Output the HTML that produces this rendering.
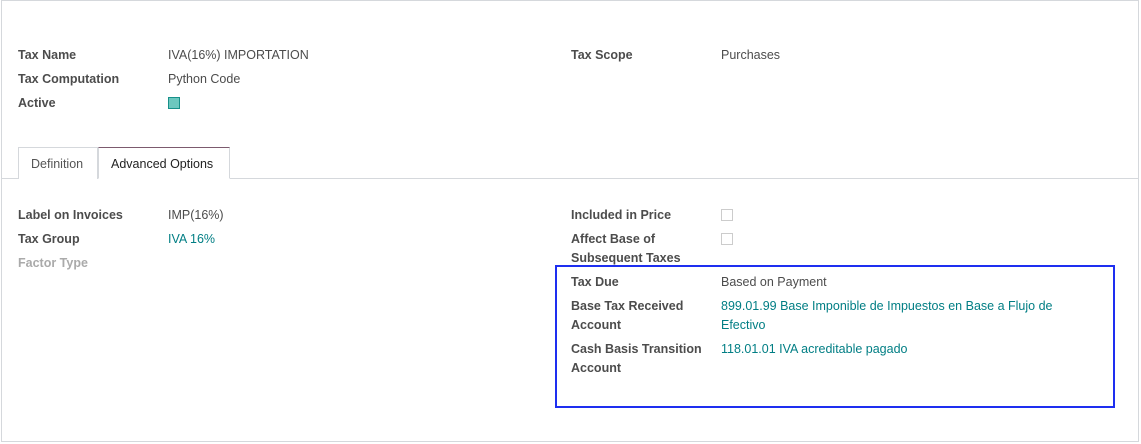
<!DOCTYPE html>
<html><head><style>
body{margin:0;width:1141px;height:444px;background:#fff;font-family:"Liberation Sans",sans-serif;font-size:12.5px;color:#4c4c4c;position:relative;overflow:hidden}
.frame{position:absolute;left:1px;top:0;width:1138px;height:442px;border:1px solid #d5d8dc;box-sizing:border-box}
.t{position:absolute;white-space:nowrap;line-height:19px;margin-top:1px}
.b{font-weight:bold;color:#4c4c4c}
.g{color:#017e84}
.m{color:#aaa;font-weight:bold}
.cb{position:absolute;width:12px;height:12px;border:1px solid #ccc;box-sizing:border-box;background:#fff}
</style></head><body>
<div class="frame"></div>
<div class="t b" style="left:18px;top:45px">Tax Name</div>
<div class="t" style="left:168px;top:45px">IVA(16%) IMPORTATION</div>
<div class="t b" style="left:18px;top:69px">Tax Computation</div>
<div class="t" style="left:168px;top:69px">Python Code</div>
<div class="t b" style="left:18px;top:93px">Active</div>
<div class="cb" style="left:168px;top:97px;background:#6cc8bf;border-color:#17908a"></div>
<div class="t b" style="left:571px;top:45px">Tax Scope</div>
<div class="t" style="left:721px;top:45px">Purchases</div>
<div style="position:absolute;left:1px;top:178px;width:1138px;border-top:1px solid #d5d8dc"></div>
<div style="position:absolute;left:18px;top:147px;width:80px;height:32px;border:1px solid #d5d8dc;border-bottom:none;box-sizing:border-box;background:#fff"></div>
<div class="t" style="left:31px;top:154px;color:#555">Definition</div>
<div style="position:absolute;left:98px;top:147px;width:132px;height:32px;border:1px solid #d5d8dc;border-top-color:#7c5a6e;border-bottom:1px solid #fff;box-sizing:border-box;background:#fff"></div>
<div class="t" style="left:111px;top:154px;color:#222">Advanced Options</div>
<div class="t b" style="left:18px;top:205px">Label on Invoices</div>
<div class="t" style="left:168px;top:205px">IMP(16%)</div>
<div class="t b" style="left:18px;top:229px">Tax Group</div>
<div class="t g" style="left:168px;top:229px">IVA 16%</div>
<div class="t m" style="left:18px;top:253px">Factor Type</div>
<div class="t b" style="left:571px;top:205px">Included in Price</div>
<div class="cb" style="left:721px;top:209px"></div>
<div class="t b" style="left:571px;top:229px">Affect Base of</div>
<div class="cb" style="left:721px;top:233px"></div>
<div class="t b" style="left:571px;top:248px">Subsequent Taxes</div>
<div class="t b" style="left:571px;top:272px">Tax Due</div>
<div class="t" style="left:721px;top:272px">Based on Payment</div>
<div class="t b" style="left:571px;top:296px">Base Tax Received</div>
<div class="t b" style="left:571px;top:315px">Account</div>
<div class="t g" style="left:721px;top:296px">899.01.99 Base Imponible de Impuestos en Base a Flujo de</div>
<div class="t g" style="left:721px;top:315px">Efectivo</div>
<div class="t b" style="left:571px;top:339px">Cash Basis Transition</div>
<div class="t b" style="left:571px;top:358px">Account</div>
<div class="t g" style="left:721px;top:339px">118.01.01 IVA acreditable pagado</div>
<div style="position:absolute;left:555px;top:265px;width:560px;height:143px;border:2px solid #1e2ff0;box-sizing:border-box"></div>
</body></html>
